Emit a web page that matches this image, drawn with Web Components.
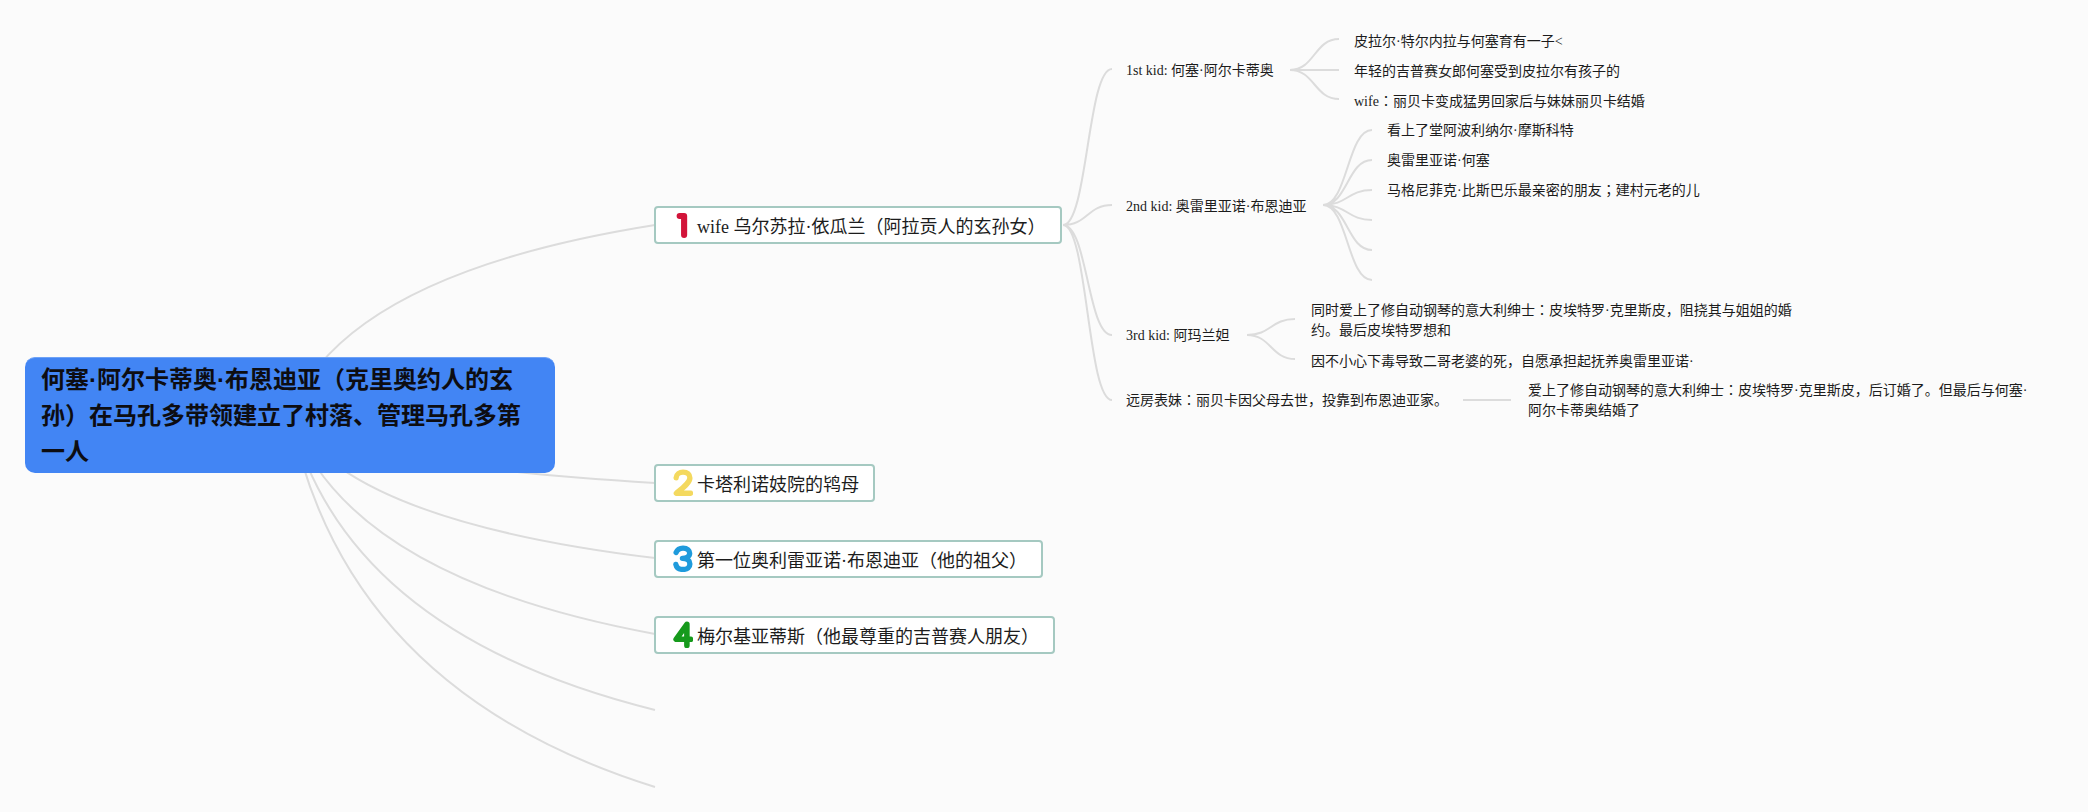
<!DOCTYPE html>
<html>
<head>
<meta charset="utf-8">
<title>mind map</title>
<style>
  html, body { margin: 0; height: 100%; background: #fbfbfb; overflow: hidden; }
  body { font-family: "Liberation Serif", "Noto Sans CJK JP", serif; color: #1c1c1c; }
</style>
</head>
<body>
<mind-map>
  <mind-links></mind-links>
  <root-topic x="25" y="357" w="530">何塞·阿尔卡蒂奥·布恩迪亚（克里奥约人的玄孙）在马孔多带领建立了村落、管理马孔多第一人</root-topic>

  <main-topic x="654" y="206" w="408" n="1">wife 乌尔苏拉·依瓜兰（阿拉贡人的玄孙女）</main-topic>
  <main-topic x="654" y="464" w="221" n="2">卡塔利诺妓院的鸨母</main-topic>
  <main-topic x="654" y="540" w="389" n="3">第一位奥利雷亚诺·布恩迪亚（他的祖父）</main-topic>
  <main-topic x="654" y="616" w="401" n="4">梅尔基亚蒂斯（他最尊重的吉普赛人朋友）</main-topic>

  <sub-topic x="1126" y="61">1st kid: 何塞·阿尔卡蒂奥</sub-topic>
  <sub-topic x="1354" y="32">皮拉尔·特尔内拉与何塞育有一子&lt;</sub-topic>
  <sub-topic x="1354" y="62">年轻的吉普赛女郎何塞受到皮拉尔有孩子的</sub-topic>
  <sub-topic x="1354" y="92">wife：丽贝卡变成猛男回家后与妹妹丽贝卡结婚</sub-topic>

  <sub-topic x="1126" y="197">2nd kid: 奥雷里亚诺·布恩迪亚</sub-topic>
  <sub-topic x="1387" y="121">看上了堂阿波利纳尔·摩斯科特</sub-topic>
  <sub-topic x="1387" y="151">奥雷里亚诺·何塞</sub-topic>
  <sub-topic x="1387" y="181">马格尼菲克·比斯巴乐最亲密的朋友；建村元老的儿</sub-topic>

  <sub-topic x="1126" y="326">3rd kid: 阿玛兰妲</sub-topic>
  <sub-topic x="1311" y="301" w="490">同时爱上了修自动钢琴的意大利绅士：皮埃特罗·克里斯皮，阻挠其与姐姐的婚约。最后皮埃特罗想和</sub-topic>
  <sub-topic x="1311" y="352">因不小心下毒导致二哥老婆的死，自愿承担起抚养奥雷里亚诺·</sub-topic>

  <sub-topic x="1126" y="391">远房表妹：丽贝卡因父母去世，投靠到布恩迪亚家。</sub-topic>
  <sub-topic x="1528" y="381" w="505">爱上了修自动钢琴的意大利绅士：皮埃特罗·克里斯皮，后订婚了。但最后与何塞·阿尔卡蒂奥结婚了</sub-topic>
</mind-map>

<script>
// small base so every topic reads its place on the canvas from attributes
class CanvasItem extends HTMLElement {
  connectedCallback() {
    this.style.left = this.getAttribute('x') + 'px';
    this.style.top = this.getAttribute('y') + 'px';
    if (this.hasAttribute('w')) this.style.width = this.getAttribute('w') + 'px';
  }
}

const mapTemplate = document.createElement('template');
mapTemplate.innerHTML = `
  <style>
    :host { display: block; position: relative; width: 2088px; height: 812px; }
  </style>
  <slot></slot>
`;
class MindMap extends HTMLElement {
  constructor() {
    super();
    this.attachShadow({mode: 'open'});
    this.shadowRoot.appendChild(mapTemplate.content.cloneNode(true));
  }
}

class MindLinks extends HTMLElement {
  constructor() {
    super();
    this.attachShadow({mode: 'open'});
  }
  connectedCallback() {
    let d = '';
    // root branches come out from behind the blue box
    for (const y of [225, 483, 558, 634, 710, 787]) {
      d += `M290 414Q345 ${414 + 0.74 * (y - 414)} 655 ${y}`;
    }
    const fan = (x0, y0, x1, ends) => {
      const mid = (x0 + x1) / 2;
      for (const y of ends) d += `M${x0} ${y0}C${mid} ${y0} ${mid} ${y} ${x1} ${y}`;
    };
    fan(1063, 225, 1112, [69, 205, 335, 400]);
    fan(1290, 70, 1339, [39, 70, 99]);
    fan(1323, 205, 1372, [130, 160, 190, 220, 250, 280]);
    fan(1247, 335, 1295, [319, 359]);
    d += 'M1463 400H1511';
    this.shadowRoot.innerHTML = `
      <style>
        :host { display: block; position: absolute; left: 0; top: 0; }
        svg { display: block; }
      </style>
      <svg width="2088" height="812" fill="none" stroke="#dcdcdc" stroke-width="2">
        <path d="${d}"/>
      </svg>
    `;
  }
}

const rootTemplate = document.createElement('template');
rootTemplate.innerHTML = `
  <style>
    :host {
      display: block;
      position: absolute;
      box-sizing: border-box;
      padding: 4px 34px 3px 16px;
      background: #4285f4;
      border-top: 1px solid #6ea2f6;
      border-radius: 10px;
      font: 700 24px/36px "Liberation Sans", "Noto Sans CJK JP", sans-serif;
      color: #0d0d12;
    }
  </style>
  <slot></slot>
`;
class RootTopic extends CanvasItem {
  constructor() {
    super();
    this.attachShadow({mode: 'open'});
    this.shadowRoot.appendChild(rootTemplate.content.cloneNode(true));
  }
}

const MARKS = {
  1: ['#d2143a', 'M6 4.5H10V21.5', 5.5],
  2: ['#f4d95f', 'M2.8 8C3 4.5 6 2.8 9 2.8C13 2.8 15.2 5 15.2 8C15.2 12 10 16 3 21.8H15.8', 4.8],
  3: ['#1f9bdc', 'M2.8 6.8C4 3.8 6 2.8 9 2.8C13 2.8 15 5 15 7.5C15 10.5 12 12 8.5 12C13 12 15.2 14 15.2 17C15.2 20 13 22 9 22C5.5 22 3.2 20.5 2.6 17.5', 4.8],
  4: ['#169a1c', 'M12.5 22V3L2.8 16.5H15.8', 5]
};

class MainTopic extends CanvasItem {
  constructor() {
    super();
    this.attachShadow({mode: 'open'});
  }
  connectedCallback() {
    super.connectedCallback();
    const [color, path, width] = MARKS[this.getAttribute('n')];
    this.shadowRoot.innerHTML = `
      <style>
        :host {
          display: flex;
          position: absolute;
          box-sizing: border-box;
          height: 38px;
          align-items: center;
          gap: 5px;
          padding-left: 18px;
          background: #fff;
          border: 2px solid #a5c9c1;
          border-radius: 4px;
          font-size: 18px;
          white-space: nowrap;
        }
        svg { flex: none; display: block; margin: 0 -1px 1px; }
      </style>
      <svg width="20" height="27" viewBox="0 0 18 24.3" fill="none" stroke="${color}" stroke-width="${width}" stroke-linejoin="round" stroke-linecap="round">
        <path d="${path}"/>
      </svg>
      <span><slot></slot></span>
    `;
  }
}

const subTemplate = document.createElement('template');
subTemplate.innerHTML = `
  <style>
    :host {
      display: block;
      position: absolute;
      font-size: 14px;
      line-height: 20px;
    }
  </style>
  <slot></slot>
`;
class SubTopic extends CanvasItem {
  constructor() {
    super();
    this.attachShadow({mode: 'open'});
    this.shadowRoot.appendChild(subTemplate.content.cloneNode(true));
  }
  connectedCallback() {
    super.connectedCallback();
    if (!this.hasAttribute('w')) this.style.whiteSpace = 'nowrap';
  }
}

customElements.define('mind-map', MindMap);
customElements.define('mind-links', MindLinks);
customElements.define('root-topic', RootTopic);
customElements.define('main-topic', MainTopic);
customElements.define('sub-topic', SubTopic);
</script>
</body>
</html>
